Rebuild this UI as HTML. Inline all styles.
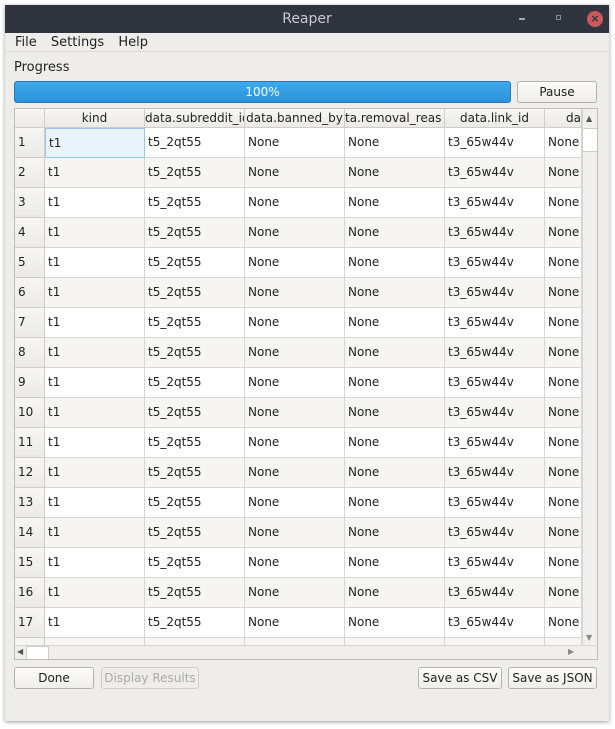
<!DOCTYPE html><html><head><style>
body{margin:0;width:615px;height:729px;background:#fff;position:relative;overflow:hidden;font-family:"DejaVu Sans","Liberation Sans",sans-serif;font-size:12px;color:#222}
div{position:absolute;box-sizing:border-box}
.win{left:5px;top:5px;width:604px;height:716px;background:#efedea;box-shadow:0 1px 4px rgba(0,0,0,.4)}
.tb{left:5px;top:5px;width:604px;height:28px;background:#2f343f;color:#c8cad0;font-size:14px;text-align:center;line-height:28px}
.btn{border:1px solid #b5b2ad;border-radius:3px;background:linear-gradient(#fbfbfa,#f0eeec);text-align:center;line-height:20px;height:22px}
.c{height:30px;line-height:28px;border-right:1px solid #d6d6d6;border-bottom:1px solid #d6d6d6;padding-left:3px;overflow:hidden;white-space:nowrap}
.h{height:19px;line-height:18px;border-right:1px solid #d0cdc8;border-bottom:1px solid #d0cdc8;text-align:center;overflow:hidden;white-space:nowrap;background:linear-gradient(#f7f6f5,#eceae7)}
</style></head><body>
<div class="win"></div>
<div class="tb">Reaper</div>
<div style="left:519px;top:18px;width:6px;height:2px;background:#9aa"></div>
<div style="left:556px;top:15px;width:5px;height:5px;border:1px solid #889"></div>
<div style="left:587px;top:11px;width:16px;height:16px;border-radius:50%;background:#cc575d;color:#2f343f;font-size:11px;line-height:16px;text-align:center;font-weight:bold">×</div>
<div style="left:15px;top:35px;line-height:16px;font-size:13px;word-spacing:10px">File Settings Help</div>
<div style="left:5px;top:51px;width:604px;height:1px;background:#dcd9d5"></div>
<div style="left:14px;top:60px;font-size:13px">Progress</div>
<div style="left:14px;top:81px;width:497px;height:22px;border:1px solid #2a78b8;border-radius:3px;background:linear-gradient(#3ea9ec,#2d93dc);color:#fff;text-align:center;line-height:20px">100%</div>
<div class="btn" style="left:517px;top:81px;width:80px">Pause</div>
<div style="left:14px;top:108px;width:584px;height:552px;border:1px solid #c0bdb8;background:#fff;overflow:hidden" id="t"></div>
<div class="btn" style="left:14px;top:667px;width:80px">Done</div>
<div class="btn" style="left:101px;top:667px;width:98px;color:#aaa;background:#efedea;border-color:#cfcdc9">Display Results</div>
<div class="btn" style="left:418px;top:667px;width:84px">Save as CSV</div>
<div class="btn" style="left:508px;top:667px;width:89px">Save as JSON</div>
<script>
var t=document.getElementById('t'),h='';
var cols=[[0,30],[30,100],[130,100],[230,100],[330,100],[430,100],[530,37]];
var hd=['','kind','data.subreddit_id','data.banned_by','ta.removal_reas','data.link_id','da'];
var al=['center','center','left','center','left','center','right'];
for(var i=0;i<7;i++)h+='<div class="h" style="left:'+cols[i][0]+'px;top:0;width:'+cols[i][1]+'px;text-align:'+al[i]+'">'+hd[i]+'</div>';
var v=['','t1','t5_2qt55','None','None','t3_65w44v','None'];
for(var r=0;r<18;r++){var y=19+r*30,bg=r%2?'#f6f5f4':'#fff';
 h+='<div class="c" style="left:0;top:'+y+'px;width:30px;background:linear-gradient(#f7f6f5,#eceae7);border-color:#d0cdc8">'+(r+1)+'</div>';
 for(var i=1;i<7;i++)h+='<div class="c" style="left:'+cols[i][0]+'px;top:'+y+'px;width:'+cols[i][1]+'px;background:'+(r==0&&i==1?'#e8f3fb;border:1px solid #9cc8e8':bg)+'">'+v[i]+'</div>';}
h+='<div style="left:567px;top:0;width:16px;height:536px;background:#f0efed;border-left:1px solid #d6d6d6"></div>';
h+='<div style="left:567px;top:19px;width:16px;height:24px;background:#fff;border:1px solid #d0cdc8"></div>';
h+='<div style="left:571px;top:5px;font-size:8px;color:#555">▲</div><div style="left:571px;top:524px;font-size:8px;color:#888">▼</div>';
h+='<div style="left:0;top:536px;width:583px;height:15px;background:#f0efed;border-top:1px solid #d6d6d6"></div>';
h+='<div style="left:11px;top:537px;width:23px;height:14px;background:#fff;border:1px solid #d0cdc8"></div>';
h+='<div style="left:2px;top:538px;font-size:8px;color:#555">◀</div><div style="left:553px;top:538px;font-size:8px;color:#888">▶</div>';
t.innerHTML=h;
</script>
</body></html>
